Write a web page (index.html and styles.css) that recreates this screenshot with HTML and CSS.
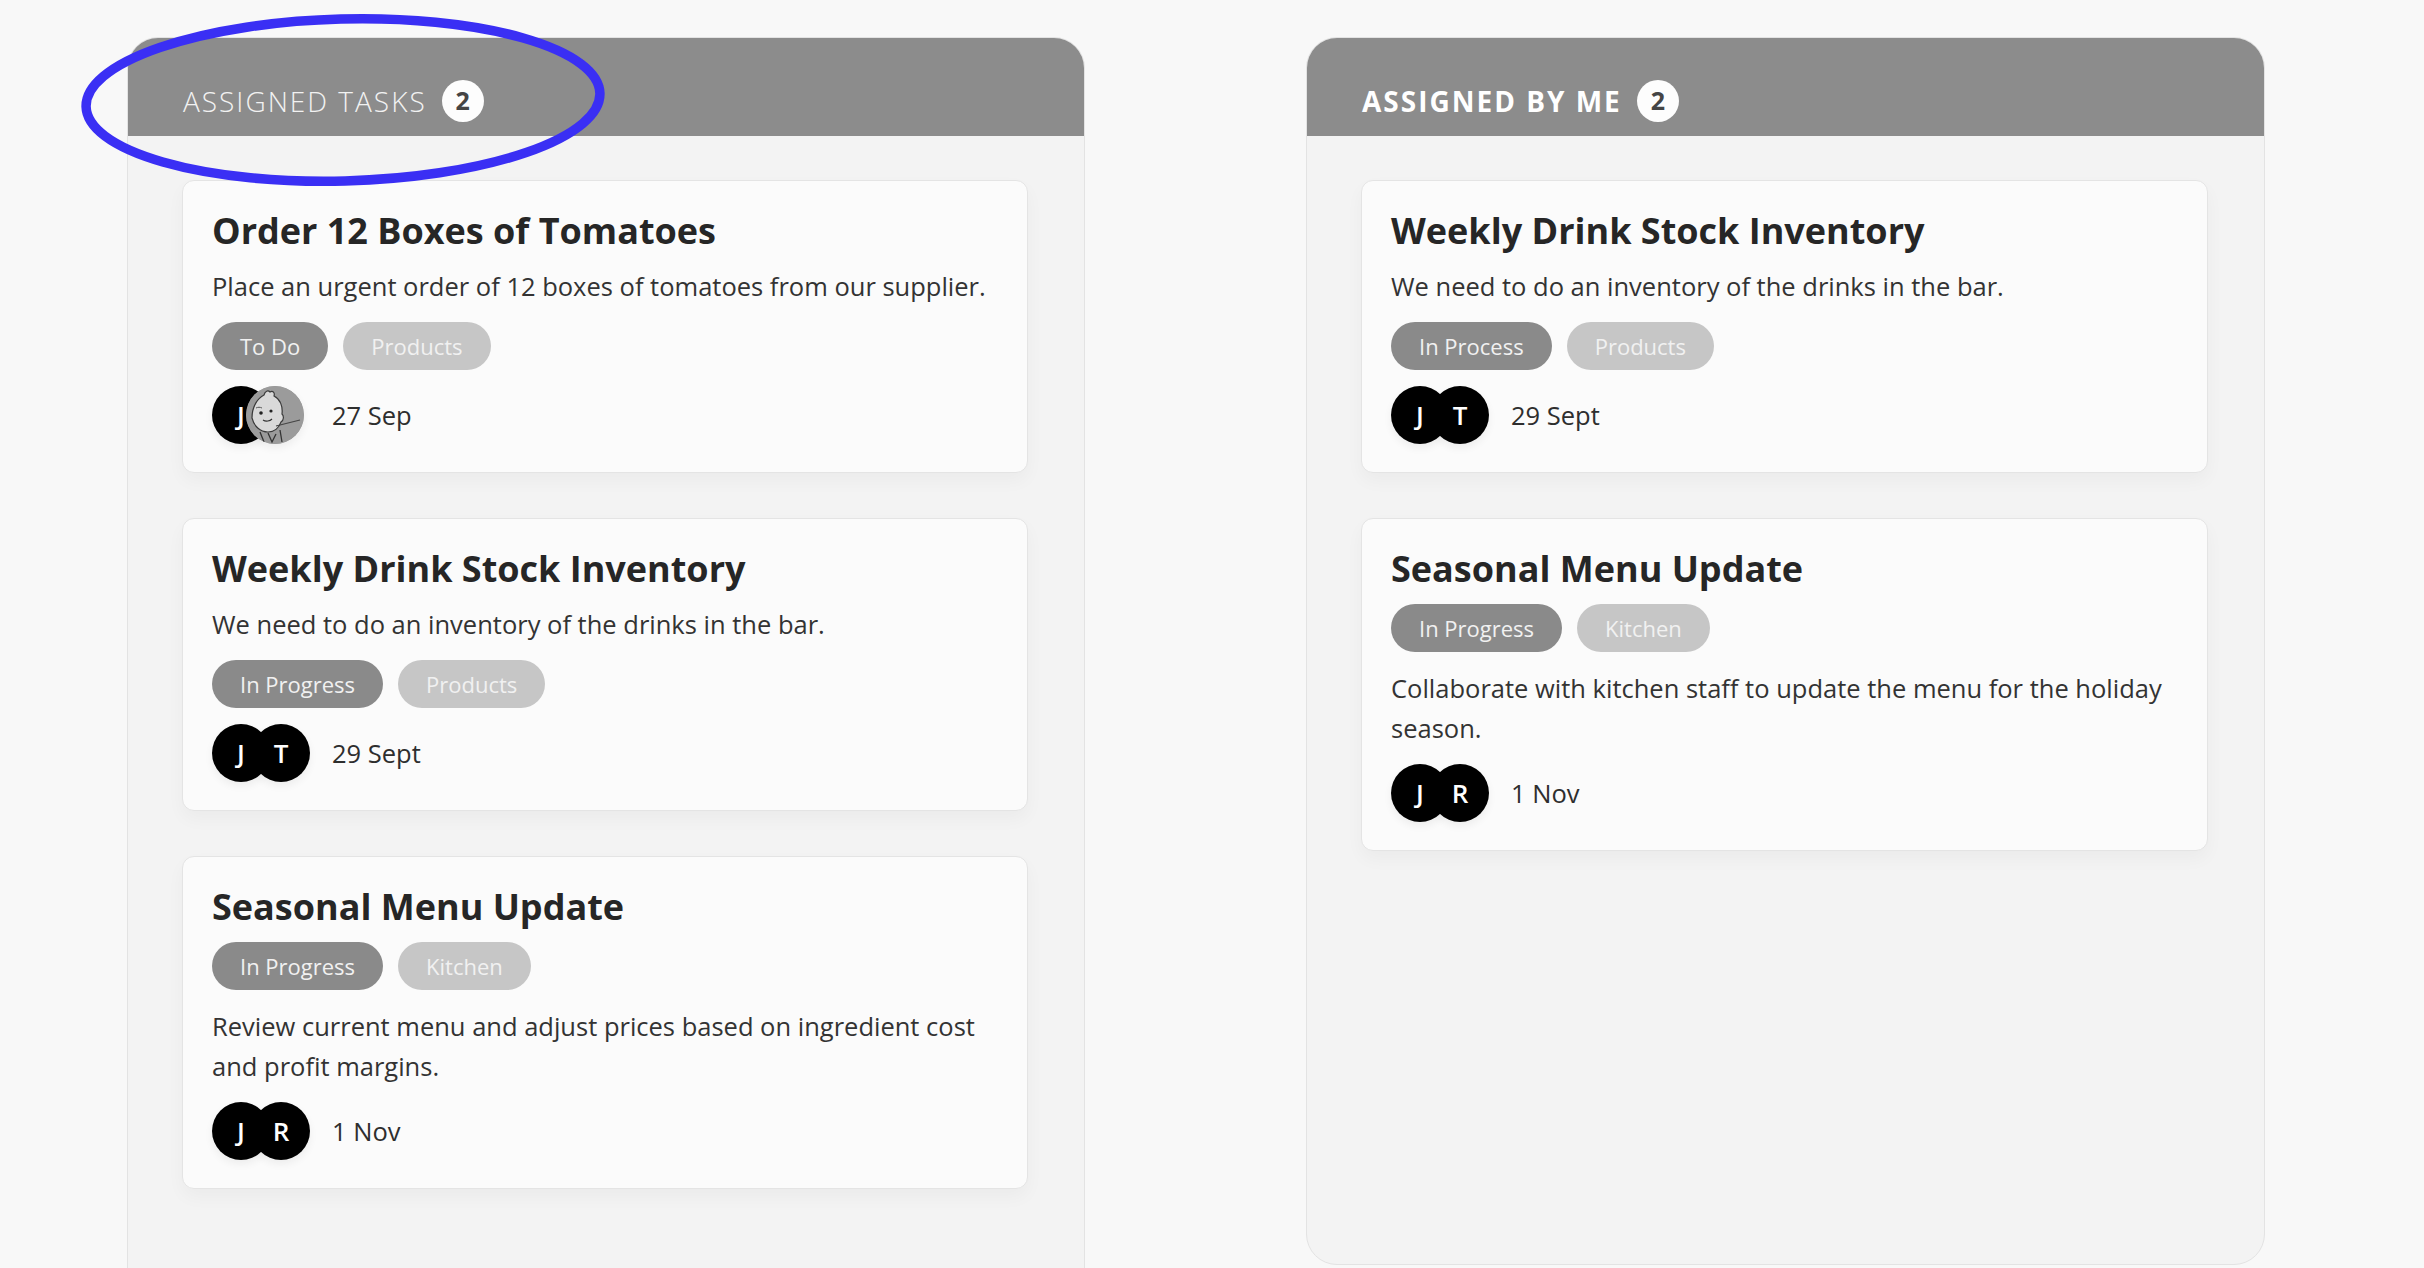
FILE: index.html
```html
<!DOCTYPE html>
<html lang="en">
<head>
<meta charset="utf-8">
<title>Tasks</title>
<link rel="stylesheet" href="styles.css">
</head>
<body>
<div class="board">
  <section class="panel panel-left">
    <header class="panel-head">
      <h2 class="head-title light">ASSIGNED TASKS</h2>
      <span class="badge">2</span>
    </header>
    <div class="panel-body">
      <article class="card">
        <h3 class="card-title">Order 12 Boxes of Tomatoes</h3>
        <p class="card-desc">Place an urgent order of 12 boxes of tomatoes from our supplier.</p>
        <div class="tags"><span class="tag tag-status">To Do</span><span class="tag tag-cat">Products</span></div>
        <div class="meta">
          <div class="avatars">
            <span class="avatar">J</span>
            <span class="avatar avatar-img">
              <svg viewBox="0 0 58 58" width="58" height="58">
                <circle cx="29" cy="29" r="29" fill="#9b9b9b"/>
                <path d="M6 32 C6 20 12 12 18 9 C19 5 22 4 24 6 C27 4 29 7 28 10 C34 13 37 20 36 28 C38 30 38 34 35 36 C33 42 28 46 22 46 C14 46 8 40 6 32 Z" fill="#d9d9d9" stroke="#3a3a3a" stroke-width="1.2"/>
                <circle cx="15" cy="27" r="1.8" fill="#222"/>
                <circle cx="25" cy="25" r="1.6" fill="#222"/>
                <path d="M17 34 C20 36 24 35 26 33" fill="none" stroke="#333" stroke-width="1.1"/>
                <path d="M30 40 L54 34" stroke="#444" stroke-width="1.2" fill="none"/>
                <path d="M14 46 L18 56 M22 47 L26 56 L30 48 M34 44 L36 56" stroke="#333" stroke-width="1.3" fill="none"/>
                <path d="M10 22 C12 21 14 21 16 22" stroke="#555" stroke-width="1" fill="none"/>
              </svg>
            </span>
          </div>
          <span class="date">27 Sep</span>
        </div>
      </article>
      <article class="card">
        <h3 class="card-title">Weekly Drink Stock Inventory</h3>
        <p class="card-desc">We need to do an inventory of the drinks in the bar.</p>
        <div class="tags"><span class="tag tag-status">In Progress</span><span class="tag tag-cat">Products</span></div>
        <div class="meta">
          <div class="avatars"><span class="avatar">J</span><span class="avatar">T</span></div>
          <span class="date">29 Sept</span>
        </div>
      </article>
      <article class="card">
        <h3 class="card-title">Seasonal Menu Update</h3>
        <div class="tags"><span class="tag tag-status">In Progress</span><span class="tag tag-cat">Kitchen</span></div>
        <p class="card-desc">Review current menu and adjust prices based on ingredient cost and profit margins.</p>
        <div class="meta">
          <div class="avatars"><span class="avatar">J</span><span class="avatar">R</span></div>
          <span class="date">1 Nov</span>
        </div>
      </article>
    </div>
  </section>

  <section class="panel panel-right">
    <header class="panel-head">
      <h2 class="head-title bold">ASSIGNED BY ME</h2>
      <span class="badge">2</span>
    </header>
    <div class="panel-body">
      <article class="card">
        <h3 class="card-title">Weekly Drink Stock Inventory</h3>
        <p class="card-desc">We need to do an inventory of the drinks in the bar.</p>
        <div class="tags"><span class="tag tag-status">In Process</span><span class="tag tag-cat">Products</span></div>
        <div class="meta">
          <div class="avatars"><span class="avatar">J</span><span class="avatar">T</span></div>
          <span class="date">29 Sept</span>
        </div>
      </article>
      <article class="card">
        <h3 class="card-title">Seasonal Menu Update</h3>
        <div class="tags"><span class="tag tag-status">In Progress</span><span class="tag tag-cat">Kitchen</span></div>
        <p class="card-desc">Collaborate with kitchen staff to update the menu for the holiday season.</p>
        <div class="meta">
          <div class="avatars"><span class="avatar">J</span><span class="avatar">R</span></div>
          <span class="date">1 Nov</span>
        </div>
      </article>
    </div>
  </section>
</div>

<svg class="annotation" viewBox="0 0 530 180" width="530" height="180" aria-hidden="true">
  <ellipse cx="265" cy="88" rx="257" ry="81" fill="none" stroke="#3a2ff4" stroke-width="9.5" transform="rotate(-1.5 265 88)"/>
</svg>
</body>
</html>
```

FILE: styles.css
```css
* { box-sizing: border-box; }

html, body {
  margin: 0;
  padding: 0;
  background: #f8f8f8;
  font-family: "Open Sans", "Noto Sans", "Liberation Sans", sans-serif;
  color: #2a2a2a;
  overflow: hidden;
}

.board {
  display: flex;
  align-items: flex-start;
  gap: 221px;
  padding: 37px 0 0 127px;
}

.panel {
  width: 958px;
  background: #f3f3f3;
  border: 1px solid #e3e3e3;
  border-radius: 31px;
  overflow: hidden;
}

.panel-right {
  width: 959px;
  min-height: 1228px;
}

.panel-head {
  height: 99px;
  background: #8c8c8c;
  display: flex;
  align-items: center;
  padding: 28px 0 0 56px;
  gap: 15px;
  margin: -1px -1px 0 -1px;
}

.head-title {
  margin: 0;
  font-size: 28px;
  line-height: 40px;
  letter-spacing: 2px;
  color: #f2f2f2;
}

.head-title.light { font-weight: 300; }
.head-title.bold { font-weight: 700; letter-spacing: 2px; color: #ffffff; }

.badge {
  width: 42px;
  height: 42px;
  border-radius: 50%;
  background: #fdfdfd;
  color: #454545;
  font-weight: 700;
  font-size: 25px;
  display: flex;
  align-items: center;
  justify-content: center;
  line-height: 1;
}

.panel-body {
  display: flex;
  flex-direction: column;
  gap: 45px;
  padding: 44px 56px 110px 54px;
}

.card {
  background: #fbfbfb;
  border: 1px solid #e4e4e4;
  border-radius: 12px;
  box-shadow: 0 8px 18px rgba(0, 0, 0, 0.035);
  padding: 25px 30px 28px 29px;
  display: flex;
  flex-direction: column;
  gap: 16px;
}

.card-title {
  margin: 0 0 -3px 0;
  padding-top: 3px;
  font-size: 36px;
  line-height: 44px;
  font-weight: 700;
  color: #262626;
}

.card-desc {
  margin: 0;
  font-size: 25.5px;
  line-height: 40px;
  color: #333333;
}

.tags {
  display: flex;
  gap: 15px;
}

.tag {
  height: 48px;
  border-radius: 24px;
  padding: 0 28px;
  display: flex;
  align-items: center;
  font-size: 22px;
  color: #f1f1f1;
}

.tag-status { background: #8a8a8a; }
.tag-cat { background: #c6c6c6; }

.meta {
  display: flex;
  align-items: center;
  gap: 22px;
  height: 58px;
}

.avatars {
  display: flex;
}

.avatar {
  width: 58px;
  height: 58px;
  border-radius: 50%;
  background: #000;
  color: #fff;
  font-weight: 600;
  font-size: 26px;
  display: flex;
  align-items: center;
  justify-content: center;
  box-shadow: 0 4px 8px rgba(0, 0, 0, 0.06);
}

.avatar + .avatar { margin-left: -18px; }

.avatar-img {
  background: #9b9b9b;
  overflow: hidden;
}

.avatars .avatar-img { margin-left: -24px; }

.avatar-img svg { display: block; }

.date {
  font-size: 25.5px;
  color: #2e2e2e;
}

.panel-left .card:first-child .date { margin-left: 6px; }

.annotation {
  position: absolute;
  left: 78px;
  top: 12px;
  pointer-events: none;
}
```
